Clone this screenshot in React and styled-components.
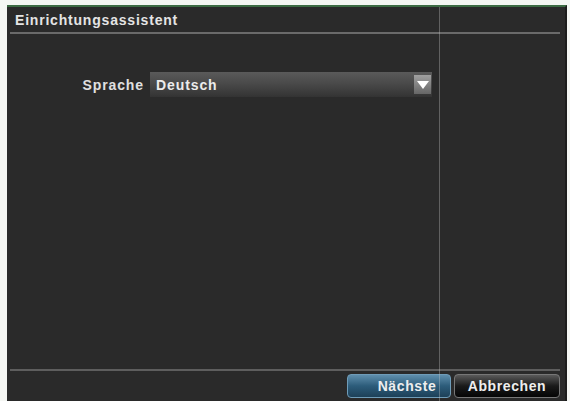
import React from "react";
import styled, { createGlobalStyle } from "styled-components";

const Global = createGlobalStyle`
  html, body { margin: 0; padding: 0; background: #f4f6f3; }
  body { font-family: "Liberation Sans", Arial, sans-serif; }
`;

const Frame = styled.div`
  width: 570px;
  height: 401px;
  box-sizing: border-box;
  padding: 5px 3px 0 7px;
  overflow: hidden;
`;

const Panel = styled.div`
  position: relative;
  height: 396px;
  box-sizing: border-box;
  background: #2a2a2a;
  border-top: 2px solid #3d6b44;
  border-right: 2px solid #1c1c1c;
  display: flex;
  flex-direction: column;
  padding: 0 5px 0 3px;
`;

const TitleBar = styled.div`
  height: 25px;
  display: flex;
  align-items: center;
  padding-left: 5px;
  border-bottom: 2px solid #6a6a6a;
  color: #e4e4e4;
  font-size: 14px;
  font-weight: bold;
  letter-spacing: 0.8px;
`;

const Content = styled.div`
  flex: 1;
  padding-top: 38px;
  padding-left: 68px;
`;

const Row = styled.div`
  display: flex;
  align-items: center;
  gap: 6px;
`;

const Label = styled.span`
  color: #e0e0e0;
  font-size: 14px;
  font-weight: bold;
  letter-spacing: 0.9px;
  width: 66px;
  text-align: right;
  white-space: nowrap;
`;

const Select = styled.div`
  width: 282px;
  height: 25px;
  box-sizing: border-box;
  display: flex;
  align-items: center;
  justify-content: space-between;
  padding-left: 6px;
  background: linear-gradient(#5a5a5a, #4a4a4a 45%, #333333);
  color: #ececec;
  font-size: 14px;
  font-weight: bold;
  letter-spacing: 0.9px;
`;

const Arrow = styled.div`
  width: 17px;
  height: 19px;
  margin-right: 1px;
  background: linear-gradient(#a0a0a0, #666);
  display: flex;
  align-items: center;
  justify-content: center;
`;

const Footer = styled.div`
  height: 30px;
  border-top: 2px solid #5e5e5e;
  display: flex;
  justify-content: flex-end;
  align-items: center;
  gap: 3px;
`;

const Button = styled.div`
  height: 24px;
  width: ${(p) => p.$w}px;
  box-sizing: border-box;
  border-radius: 4px;
  display: flex;
  align-items: center;
  justify-content: center;
  color: #eeeeee;
  font-size: 14px;
  font-weight: bold;
  letter-spacing: 0.6px;
  background: ${(p) =>
    p.$primary
      ? "linear-gradient(#5f8eac, #2c5c7a 50%, #1d4058)"
      : "linear-gradient(#5a5a5a, #1a1a1a 50%, #050505)"};
  border: 1px solid ${(p) => (p.$primary ? "#6f9cb8" : "#777")};
  padding-left: ${(p) => (p.$primary ? 16 : 0)}px;
`;

const VLine = styled.div`
  position: absolute;
  top: 0;
  bottom: 0;
  left: 432px;
  width: 1px;
  background: rgba(200, 200, 200, 0.35);
`;

export default function App() {
  return (
    <>
      <Global />
      <Frame>
        <Panel>
          <TitleBar>Einrichtungsassistent</TitleBar>
          <Content>
            <Row>
              <Label>Sprache</Label>
              <Select>
                Deutsch
                <Arrow>
                  <svg width="12" height="8" viewBox="0 0 12 8">
                    <polygon points="0,0 12,0 6,8" fill="#ffffff" />
                  </svg>
                </Arrow>
              </Select>
            </Row>
          </Content>
          <Footer>
            <Button $primary $w={104}>Nächste</Button>
            <Button $w={106}>Abbrechen</Button>
          </Footer>
          <VLine />
        </Panel>
      </Frame>
    </>
  );
}
